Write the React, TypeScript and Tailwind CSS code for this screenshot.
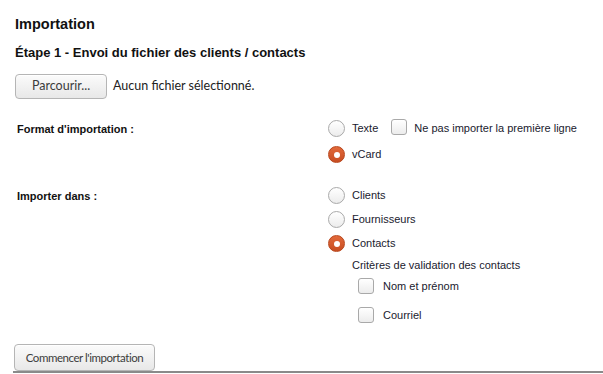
import React, { useState } from 'react';

const btn =
  "rounded-[4px] border border-[#b5b5b5] bg-gradient-to-b from-[#fbfbfb] to-[#e8e8e8] text-[#3c3c3c] font-['Lato',sans-serif] shadow-[inset_0_1px_0_#fff]";

const Radio = ({ checked, onClick }: { checked: boolean; onClick: () => void }) => (
  <span
    onClick={onClick}
    className={
      checked
        ? 'flex h-[17px] w-[17px] shrink-0 items-center justify-center rounded-full border border-[#b8461c] bg-gradient-to-b from-[#e2693a] to-[#c84e22]'
        : 'flex h-[17px] w-[17px] shrink-0 items-center justify-center rounded-full border border-[#a9a9a9] bg-gradient-to-b from-[#ffffff] to-[#ececec]'
    }
  >
    {checked && <span className="h-[6px] w-[6px] rounded-full bg-white" />}
  </span>
);

const Check = () => (
  <span className="block h-[16px] w-[16px] shrink-0 rounded-[3px] border border-[#a9a9a9] bg-gradient-to-b from-[#ffffff] to-[#ececec]" />
);

const App: React.FC = () => {
  const [format, setFormat] = useState('vcard');
  const [target, setTarget] = useState('contacts');

  return (
    <div className="h-[374px] w-[603px] overflow-hidden bg-white font-['Liberation_Sans',Arial,sans-serif] text-[#1a1a2e]">
      <div className="pl-[15px] pt-[15px]">
        <h1 className="text-[14.5px] font-bold leading-[18px] text-[#111]">Importation</h1>
        <h2 className="mt-[12px] text-[13px] font-bold leading-[16px] text-[#111]">
          Étape 1 - Envoi du fichier des clients / contacts
        </h2>
        <div className="mt-[13px] flex items-center">
          <button className={btn + ' h-[25px] w-[92px] text-[12.5px]'}>Parcourir...</button>
          <span className="ml-[6px] font-['Lato',sans-serif] text-[12.5px] text-[#222]">
            Aucun fichier sélectionné.
          </span>
        </div>
      </div>

      <div className="mt-[21px] flex">
        <div className="w-[328px] pl-[17px] pt-[2px] text-[11px] font-bold leading-[14px] text-[#111]">
          Format d'importation :
        </div>
        <div className="flex flex-col gap-[9px] text-[11px]">
          <div className="flex items-center">
            <Radio checked={format === 'texte'} onClick={() => setFormat('texte')} />
            <span className="ml-[7px]">Texte</span>
            <span className="ml-[13px] -translate-y-[2px]">
              <Check />
            </span>
            <span className="ml-[7px]">Ne pas importer la première ligne</span>
          </div>
          <div className="flex items-center">
            <Radio checked={format === 'vcard'} onClick={() => setFormat('vcard')} />
            <span className="ml-[7px]">vCard</span>
          </div>
        </div>
      </div>

      <div className="mt-[24px] flex">
        <div className="w-[328px] pl-[17px] pt-[2px] text-[11px] font-bold leading-[14px] text-[#111]">
          Importer dans :
        </div>
        <div className="flex flex-col text-[11px]">
          <div className="flex flex-col gap-[7px]">
            {[
              ['clients', 'Clients'],
              ['fournisseurs', 'Fournisseurs'],
              ['contacts', 'Contacts'],
            ].map(([k, l]) => (
              <div key={k} className="flex items-center">
                <Radio checked={target === k} onClick={() => setTarget(k)} />
                <span className="ml-[7px]">{l}</span>
              </div>
            ))}
          </div>
          <div className="ml-[24px] mt-[6px] leading-[14px]">Critères de validation des contacts</div>
          <div className="ml-[30px] mt-[6px] flex flex-col gap-[12px]">
            <div className="flex items-center">
              <Check />
              <span className="ml-[9px]">Nom et prénom</span>
            </div>
            <div className="flex items-center">
              <Check />
              <span className="ml-[9px]">Courriel</span>
            </div>
          </div>
        </div>
      </div>

      <div className="ml-[13px] mt-[21px] border-b-2 border-[#8a8a8a]">
        <button className={btn + ' ml-[1px] h-[27px] w-[141px] text-[11.5px] tracking-[-0.45px]'}>
          Commencer l'importation
        </button>
      </div>
    </div>
  );
};

export default App;
